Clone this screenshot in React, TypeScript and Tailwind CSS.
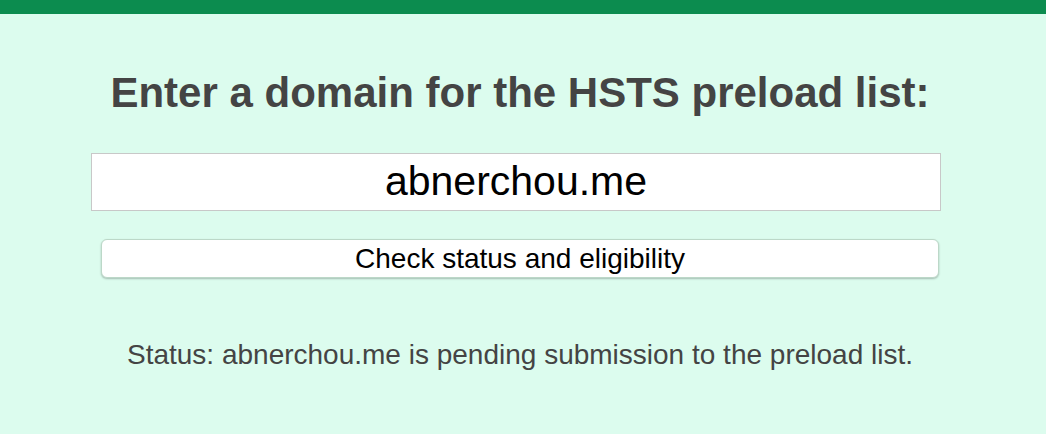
export default function App() {
	return (
		<div className="flex h-[434px] w-[1046px] flex-col bg-[#dcfcee] font-['Liberation_Sans',Arial,sans-serif]">
			<div className="h-[14px] w-full bg-[#0c8c4f]" />
			<div className="flex flex-col items-center pr-[6px]">
				<h1 className="mt-[54px] text-[42px] font-bold leading-[50px] text-[#444444]">
					Enter a domain for the HSTS preload list:
				</h1>
				<input
					className="mt-[35px] mr-[8px] h-[58px] w-[850px] border border-[#c8c8c8] bg-white text-center text-[41px] text-black outline-none"
					defaultValue="abnerchou.me"
				/>
				<button className="mt-[28px] h-[39px] w-[838px] rounded-[6px] border border-[#bcd8c8] bg-white text-[28px] leading-[37px] text-black shadow-[0_1px_2px_rgba(0,0,0,0.25)]">
					Check status and eligibility
				</button>
				<p className="mt-[60px] text-[28px] leading-[34px] text-[#444444]">
					Status: abnerchou.me is pending submission to the preload list.
				</p>
			</div>
		</div>
	)
}
